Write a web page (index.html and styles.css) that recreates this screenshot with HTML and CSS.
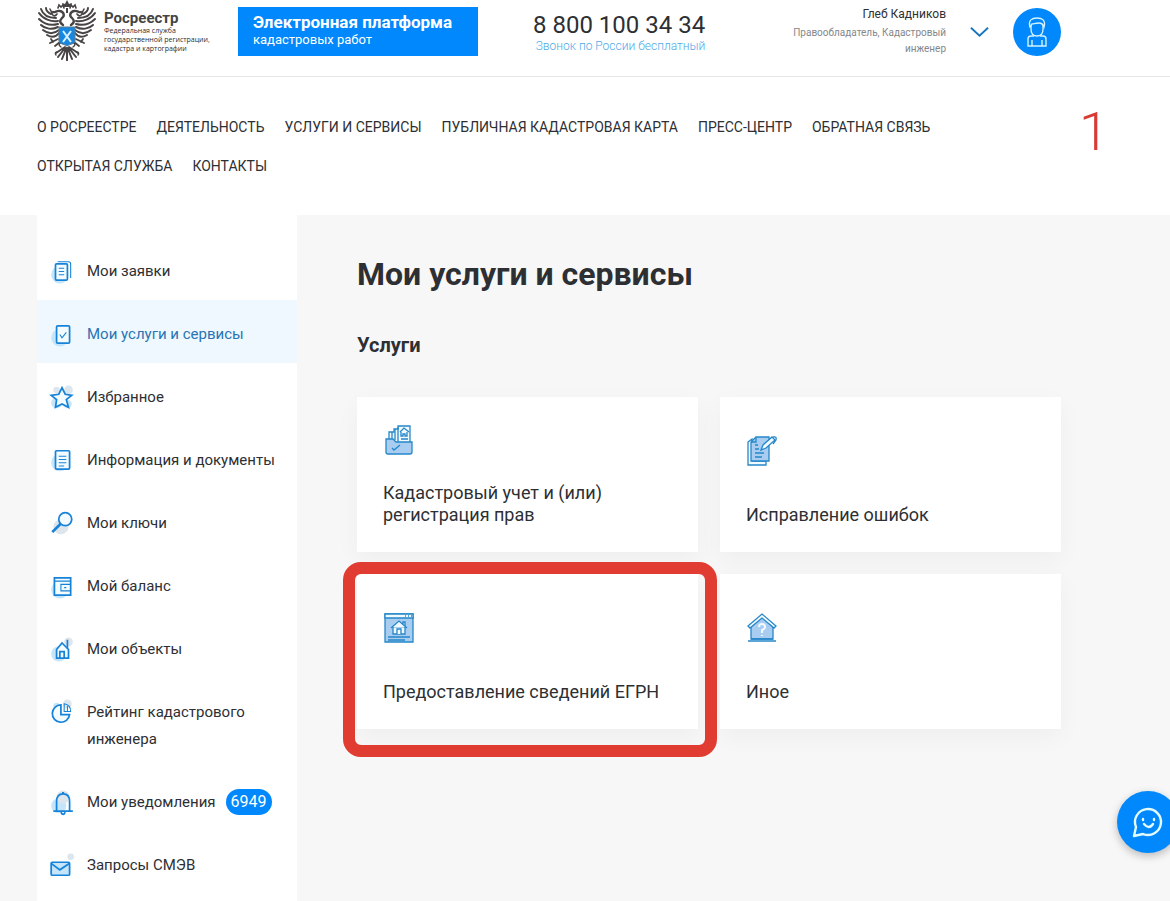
FILE: index.html
```
<!DOCTYPE html>
<html lang="ru">
<head>
    <meta charset="UTF-8">
    <meta name="viewport" content="width=device-width, initial-scale=1.0">
    <title>Росреестр - Мои услуги и сервисы</title>
    <link rel="stylesheet" href="styles.css">
</head>
<body>
    <header class="header">
        <div class="container header-row">
            <a class="logo" href="#">
                <svg class="logo-emblem" viewBox="0 0 60 62" aria-hidden="true">
                    <defs>
                        <g id="eagle-half" fill="none" stroke="#474443" stroke-linecap="round">
                            <path stroke-width="2" d="M21 21C14 22 6 19 2 13M21 24C14 26 7 24 2 19M21 27C15 30 8 29 4 25M22 30C17 34 11 34 6 30M22 33C19 37 15 38 10 35"/>
                            <path stroke-width="2" d="M19 18C12 18 6 15 4 9M14 14C10 12 9 10 9 8"/>
                            <path stroke-width="2.4" d="M26 25C23 23 22 21 25 18C28 16 27 12 23 11C20 10 18 13 16 12"/>
                            <path stroke-width="1.6" d="M20 14C18 17 15 16 15 13M21 8l1-3 2 2 2-2 1 3M13 9l2 4"/>
                            <path stroke-width="1.8" d="M21 39L13 43M23 42l-5 4M16 42l-2-3"/>
                            <path stroke-width="2" d="M28 48L21 57M29 49L25 59M28 47L19 53M30 48v12"/>
                            <path stroke-width="1.4" d="M24 47c-3-2-2-4 0-4M20 52c-2 0-2 2-1 3"/>
                        </g>
                    </defs>
                    <use href="#eagle-half"/>
                    <use href="#eagle-half" transform="matrix(-1 0 0 1 60 0)"/>
                    <path d="M26 7l-1-4 3 1 2-4 2 4 3-1-1 4zM29 8h2v5h-2z" fill="#474443"/>
                    <path d="M22 27h16v14c0 3-5 3-8 5-3-2-8-2-8-5z" fill="#1787e0" stroke="#5c7890"/>
                    <path d="M26 31l8 11M34 31l-8 11" stroke="#d8f4ff" stroke-width="2"/>
                </svg>
                <span class="logo-text">
                    <strong class="logo-title">Росреестр</strong>
                    <span class="logo-note">Федеральная служба<br>государственной регистрации,<br>кадастра и картографии</span>
                </span>
            </a>
            <a class="platform" href="#">
                <strong class="platform-title">Электронная платформа</strong>
                <span class="platform-note">кадастровых работ</span>
            </a>
            <div class="phone">
                <a class="phone-number" href="tel:88001003434">8 800 100 34 34</a>
                <span class="phone-note">Звонок по России бесплатный</span>
            </div>
            <div class="user">
                <div class="user-text">
                    <div class="user-name">Глеб Кадников</div>
                    <div class="user-role">Правообладатель, Кадастровый инженер</div>
                </div>
                <button class="user-toggle" type="button" aria-label="Меню пользователя">
                    <svg viewBox="0 0 20 12"><path d="M1 1.500l9 8.500 9-8.500"/></svg>
                </button>
                <a class="avatar" href="#" aria-label="Профиль">
                    <svg viewBox="0 0 20 30">
                        <path d="M4 8v4c0 5 3 7 6 7s6-2 6-7V8"/>
                        <path d="M3 10C1 3 5 1 10 1s9 2 7 9c-1-3-2-4-5-4-4 0-5 1-7 1-1 1-1 2-2 3z"/>
                        <path d="M7 19H4q-3 0-3 3v7h18v-7q0-3-3-3h-3M5 23v6M15 23v6"/>
                    </svg>
                </a>
            </div>
        </div>
    </header>

    <nav class="nav container" aria-label="Главное меню">
        <ul class="nav-list">
            <li><a href="#">О РОСРЕЕСТРЕ</a></li>
            <li><a href="#">ДЕЯТЕЛЬНОСТЬ</a></li>
            <li><a href="#">УСЛУГИ И СЕРВИСЫ</a></li>
            <li><a href="#">ПУБЛИЧНАЯ КАДАСТРОВАЯ КАРТА</a></li>
            <li><a href="#">ПРЕСС-ЦЕНТР</a></li>
            <li><a href="#">ОБРАТНАЯ СВЯЗЬ</a></li>
            <li><a href="#">ОТКРЫТАЯ СЛУЖБА</a></li>
            <li><a href="#">КОНТАКТЫ</a></li>
        </ul>
        <span class="step">1</span>
    </nav>

    <div class="page">
        <div class="container page-row">
            <aside class="sidebar">
                <a class="menu-item" href="#">
                    <svg class="menu-icon" viewBox="0 0 24 24">
                        <circle class="blob" cx="10" cy="15" r="8"/>
                        <rect class="paper" x="6" y="5" width="11" height="15" rx="1"/>
                        <path class="thin" d="M8 3h10q2 0 2 2v13M9 9h5M9 12h5M9 15h5"/>
                    </svg>
                    <span>Мои заявки</span>
                </a>
                <a class="menu-item active" href="#">
                    <svg class="menu-icon" viewBox="0 0 24 24">
                        <circle class="blob" cx="10" cy="15" r="8"/>
                        <rect class="paper" x="7" y="4" width="12" height="16" rx="1"/>
                        <path class="thin" d="M10 12l2 3 4-5"/>
                    </svg>
                    <span>Мои услуги и сервисы</span>
                </a>
                <a class="menu-item" href="#">
                    <svg class="menu-icon" viewBox="0 0 24 24">
                        <circle class="blob" cx="7" cy="17" r="5"/>
                        <circle class="blob grey" cx="18" cy="5" r="4"/>
                        <circle class="blob grey" cx="7" cy="5" r="3"/>
                        <circle class="blob" cx="17" cy="18" r="4"/>
                        <path class="paper" d="M12 3l3 6 6 1-5 4 2 7-6-3-6 3 1-7-5-4 7-1z"/>
                    </svg>
                    <span>Избранное</span>
                </a>
                <a class="menu-item" href="#">
                    <svg class="menu-icon" viewBox="0 0 24 24">
                        <circle class="blob" cx="10" cy="14" r="8"/>
                        <rect class="paper" x="6" y="3" width="13" height="17" rx="1"/>
                        <path class="thin" d="M9 8h7M9 11h7M9 14h7M9 17h5"/>
                    </svg>
                    <span>Информация и документы</span>
                </a>
                <a class="menu-item" href="#">
                    <svg class="menu-icon" viewBox="0 0 24 24">
                        <circle class="blob grey" cx="11" cy="15" r="7"/>
                        <circle class="paper" cx="15" cy="8" r="6"/>
                        <path class="thick" d="M11 12l-8 8"/>
                    </svg>
                    <span>Мои ключи</span>
                </a>
                <a class="menu-item" href="#">
                    <svg class="menu-icon" viewBox="0 0 24 24">
                        <circle class="blob" cx="10" cy="15" r="8"/>
                        <path class="paper" d="M5 4h15v16H5z"/>
                        <path class="thin" d="M5 7h15M20 10h-9v6h9M14 13h2"/>
                    </svg>
                    <span>Мой баланс</span>
                </a>
                <a class="menu-item" href="#">
                    <svg class="menu-icon" viewBox="0 0 24 24">
                        <circle class="blob" cx="9" cy="16" r="7"/>
                        <circle class="blob grey" cx="18" cy="5" r="4"/>
                        <path class="paper" d="M7 20v-8l5-6 6 6v8z"/>
                        <path d="M17 11V3M10 20v-6h4v6"/>
                    </svg>
                    <span>Мои объекты</span>
                </a>
                <a class="menu-item" href="#">
                    <svg class="menu-icon" viewBox="0 0 24 24">
                        <circle class="blob grey" cx="17" cy="4" r="4"/>
                        <circle class="blob" cx="7" cy="6" r="3"/>
                        <path class="paper" d="M11 5a8 8 0 1 0 8 9h-8z"/>
                        <path class="thin" d="M14 4v7h6q0-6-6-7zM17 6v5"/>
                    </svg>
                    <span>Рейтинг кадастрового инженера</span>
                </a>
                <a class="menu-item" href="#">
                    <svg class="menu-icon" viewBox="0 0 24 24">
                        <circle class="blob" cx="9" cy="15" r="7"/>
                        <circle class="blob grey" cx="13" cy="7" r="6"/>
                        <path d="M7 20v-9q0-7 6-7t6 7v9M4 20h18M11 21q2 4 4 0M12 3h2"/>
                    </svg>
                    <span>Мои уведомления</span>
                    <span class="badge">6949</span>
                </a>
                <a class="menu-item" href="#">
                    <svg class="menu-icon" viewBox="0 0 24 24">
                        <circle class="blob grey" cx="20" cy="4" r="3"/>
                        <rect class="tint" x="2" y="9" width="17" height="12" rx="1"/>
                        <path d="M2 10l8 6 9-6"/>
                    </svg>
                    <span>Запросы СМЭВ</span>
                </a>
            </aside>

            <main class="content">
                <h1>Мои услуги и сервисы</h1>
                <h2>Услуги</h2>
                <div class="cards">
                    <a class="card" href="#">
                        <svg class="card-icon" viewBox="0 0 32 32">
                            <path class="white" d="M6 19V8h5V5h4V2h12v20H6z"/>
                            <path d="M9 8v8M12 5v11M15 3v15M17 8l4-4 5 4M18 8v4h2v-2h2v2h2V8M18 15h7"/>
                            <path class="fill" d="M3 15h7l3 3h16v10q0 2-2 2H5q-2 0-2-2z"/>
                            <path d="M9 24l2 2 6-5"/>
                        </svg>
                        <span>Кадастровый учет и (или) регистрация прав</span>
                    </a>
                    <a class="card" href="#">
                        <svg class="card-icon" viewBox="0 0 32 32">
                            <path class="white" d="M2 7l4-3v22h14v4H2z"/>
                            <path class="fill" d="M10 2h13v24H5V7z"/>
                            <path d="M5 7h5V2M9 10h3M9 14h4M9 18h9M9 22h7"/>
                            <path class="white" d="M15 15l2-5 9-8 3 3-9 8z"/>
                            <path d="M27 2q4-1 3 3l-3 4"/>
                        </svg>
                        <span>Исправление ошибок</span>
                    </a>
                    <a class="card marked" href="#">
                        <svg class="card-icon" viewBox="0 0 32 32">
                            <path class="fill" d="M2 2h28v28H2z"/>
                            <path class="white" d="M2 2h28v4H2z"/>
                            <path d="M22 4h1M25 4h1M28 4h1M5 25h22M5 28h17"/>
                            <path class="white" d="M10 15v7h12v-7M20 12v-2h2v4M8 16l8-7 8 7"/>
                            <path class="white" d="M14 22v-5h4v5"/>
                        </svg>
                        <span>Предоставление сведений ЕГРН</span>
                    </a>
                    <a class="card" href="#">
                        <svg class="card-icon" viewBox="0 0 32 32">
                            <path class="fill" d="M5 14L16 5l11 9v13H5z"/>
                            <path class="white" d="M2 14L16 2l14 12-2 2L16 6 4 16z"/>
                            <path d="M5 27h22M2 29h28"/>
                            <path class="question" d="M13 15q0-3 3-3t3 3q0 2-3 3v3M16 23v1"/>
                        </svg>
                        <span>Иное</span>
                    </a>
                </div>
            </main>
        </div>
    </div>

    <button class="chat" type="button" aria-label="Чат">
        <svg viewBox="0 0 32 32">
            <path d="M4 21A13 13 0 1 1 11 28L2 30z"/>
            <path d="M12 18q5 6 9 0M11 13v1M22 13v1"/>
        </svg>
    </button>
</body>
</html>
```

FILE: styles.css
```
* {
    box-sizing: border-box;
}

body {
    margin: 0;
    min-height: 100vh;
    display: flex;
    flex-direction: column;
    font-family: Roboto, "Liberation Sans", sans-serif;
    background-color: #fff;
    color: #2d2f33;
    overflow-x: hidden;
}

a {
    color: inherit;
    text-decoration: none;
}

button {
    border: none;
    padding: 0;
    background: none;
    cursor: pointer;
}

svg {
    display: block;
    fill: none;
}

.container {
    padding-left: 37px;
    padding-right: 109px;
}

/* Header */
.header {
    border-bottom: 1px solid #e4e6e8;
}

.header-row {
    display: flex;
    align-items: flex-start;
    height: 76px;
}

.logo {
    display: flex;
    gap: 7px;
    width: 201px;
}

.logo-emblem {
    width: 60px;
    height: 62px;
    flex-shrink: 0;
}

.logo-text {
    padding-top: 10px;
    white-space: nowrap;
}

.logo-title {
    display: block;
    font-size: 15px;
    line-height: 16px;
    color: #444;
}

.logo-note {
    display: block;
    font-family: "Open Sans", sans-serif;
    font-size: 7px;
    line-height: 9px;
}

.platform {
    width: 240px;
    margin-top: 7px;
    padding: 5px 15px 8px;
    background: #0088fc;
    color: #fff;
}

.platform-title {
    display: block;
    font-size: 17px;
    line-height: 20px;
    white-space: nowrap;
}

.platform-note {
    display: block;
    font-size: 13px;
    line-height: 16px;
}

.phone {
    margin-left: 55px;
    padding-top: 11px;
    text-align: right;
    white-space: nowrap;
}

.phone-number {
    display: block;
    font-size: 24px;
    line-height: 28px;
}

.phone-note {
    display: block;
    font-size: 12px;
    line-height: 14px;
    font-weight: 300;
    color: #4ea9e8;
}

.user {
    display: flex;
    align-items: flex-start;
    gap: 24px;
    margin-left: auto;
    padding-top: 6px;
}

.user-text {
    width: 160px;
    text-align: right;
}

.user-name {
    font-size: 12px;
    line-height: 16px;
}

.user-role {
    margin-top: 3px;
    font-size: 10px;
    line-height: 16px;
    color: #85878a;
}

.user-toggle {
    margin-top: 20px;
}

.user-toggle svg {
    width: 19px;
    height: 12px;
    stroke: #1976bd;
    stroke-width: 2;
}

.avatar {
    display: flex;
    align-items: center;
    justify-content: center;
    width: 48px;
    height: 48px;
    margin-top: 2px;
    border-radius: 50%;
    background: #0088fc;
}

.avatar svg {
    width: 20px;
    height: 30px;
    stroke: #d4f2ff;
    stroke-width: 1.4;
}

/* Navigation */
.nav {
    position: relative;
    padding-top: 31px;
    padding-bottom: 29px;
}

.nav-list {
    display: flex;
    flex-wrap: wrap;
    column-gap: 20px;
    margin: 0;
    padding: 0;
    max-width: 920px;
    list-style: none;
    font-size: 14px;
    line-height: 39px;
}

.step {
    position: absolute;
    top: 25px;
    right: 61px;
    font-size: 54px;
    font-weight: 300;
    line-height: 60px;
    color: #d83a34;
}

/* Page */
.page {
    flex: 1;
    display: flex;
    background: #f7f7f7;
}

.page-row {
    display: flex;
    flex: 1;
}

.sidebar {
    width: 260px;
    flex-shrink: 0;
    padding-top: 22px;
    background: #fff;
}

.menu-item {
    display: flex;
    align-items: flex-start;
    gap: 12px;
    padding: 21px 14px 15px 12px;
    font-size: 15px;
    line-height: 27px;
}

.menu-item.active {
    background: #f0f8ff;
    color: #2874b4;
}

.menu-icon {
    width: 26px;
    height: 27px;
    flex-shrink: 0;
    stroke: #1783d8;
    stroke-width: 1.6;
}

.menu-icon .blob {
    fill: #c5e5fb;
    stroke: none;
}

.menu-icon .grey {
    fill: #dde5ed;
}

.menu-icon .paper {
    fill: #f4fbff;
}

.menu-icon .tint {
    fill: #c5e5fb;
}

.menu-icon .thin {
    stroke-width: 1;
}

.menu-icon .thick {
    stroke-width: 2.5;
}

.badge {
    margin-left: -2px;
    padding: 0 5px;
    border-radius: 13px;
    background: #0088fc;
    color: #fff;
    font-size: 16px;
    line-height: 26px;
}

.content {
    flex: 1;
    padding: 40px 0 40px 60px;
}

h1 {
    margin: 0;
    font-size: 32px;
    line-height: 38px;
}

h2 {
    margin: 40px 0;
    font-size: 20px;
    line-height: 24px;
}

.cards {
    display: grid;
    grid-template-columns: 1fr 1fr;
    gap: 22px;
}

.card {
    position: relative;
    display: flex;
    flex-direction: column;
    min-height: 155px;
    padding: 0 26px 26px;
    background: #fff;
    box-shadow: 0 8px 24px rgba(0, 0, 0, 0.04);
    font-size: 18px;
    line-height: 22px;
}

.card-icon {
    width: 32px;
    height: 32px;
    margin: auto 0;
    stroke: #2687c9;
    stroke-width: 1.3;
}

.card-icon .fill {
    fill: #a9cdf0;
}

.card-icon .white {
    fill: #f0faff;
}

.card-icon .question {
    stroke: #f0faff;
    stroke-width: 2;
}

.marked::after {
    content: "";
    position: absolute;
    top: -12px;
    right: -19px;
    bottom: -28px;
    left: -14px;
    border: 12px solid #e03c32;
    border-radius: 18px;
    z-index: 1;
}

/* Chat button */
.chat {
    position: fixed;
    right: -9px;
    bottom: 48px;
    display: flex;
    align-items: center;
    justify-content: center;
    width: 62px;
    height: 62px;
    border-radius: 50%;
    background: #0088fc;
    box-shadow: 0 3px 8px rgba(0, 0, 0, 0.25);
}

.chat svg {
    width: 32px;
    height: 32px;
    stroke: #e2fbff;
    stroke-width: 2.4;
    stroke-linecap: round;
    stroke-linejoin: round;
}
```
